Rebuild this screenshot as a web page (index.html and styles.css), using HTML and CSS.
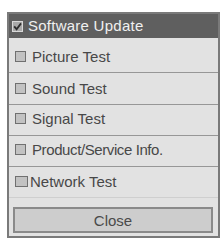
FILE: index.html
```html
<!DOCTYPE html>
<html>
<head>
<meta charset="utf-8">
<link rel="stylesheet" href="styles.css">
</head>
<body>
<div class="panel">
  <div class="row head">
    <svg class="chk" width="11" height="11" viewBox="0 0 11 11"><rect x="0.5" y="0.5" width="10" height="10" fill="#a9a9a9" stroke="#d8d8d8"/><path d="M2.2 5.4 L4.6 8.2 L9 2.4" fill="none" stroke="#2e2e2e" stroke-width="1.8"/></svg>
    <span class="ht">Software Update</span>
  </div>
  <div class="row r1"><i class="box"></i><span>Picture Test</span></div>
  <div class="row r2"><i class="box"></i><span>Sound Test</span></div>
  <div class="row r3"><i class="box"></i><span>Signal Test</span></div>
  <div class="row r3"><i class="box"></i><span class="narrow">Product/Service Info.</span></div>
  <div class="row r3 last"><i class="box wide"></i><span class="nt">Network Test</span></div>
  <div class="foot"><div class="btn">Close</div></div>
</div>
</body>
</html>
```
FILE: styles.css
```css
html, body { margin: 0; padding: 0; background: #fff; }
body { font-family: "Liberation Sans", Arial, sans-serif; }
.panel {
  margin: 12px 0 0 7px;
  width: 209px;
  border: 2px solid #7a7a7a;
  background: #e2e2e2;
}
.row {
  display: flex;
  align-items: center;
  gap: 6px;
  padding-left: 6px;
  border-bottom: 1px solid #979797;
  font-size: 15px;
  color: #484848;
  box-sizing: border-box;
}
.head {
  height: 24px;
  background: #5f5f5f;
  color: #f0f0f0;
  border-bottom: none;
  padding-left: 3px;
  padding-bottom: 2px;
  gap: 5px;
}
.ht { letter-spacing: 0.25px; }
.narrow { letter-spacing: -0.4px; }
.r1 { height: 35px; padding-top: 3px; }
.r2 { height: 32px; }
.r3 { height: 31px; padding-bottom: 3px; }
.last { border-bottom-color: #cfcfcf; padding-bottom: 1px; }
.box {
  display: block;
  width: 9px;
  height: 9px;
  background: #c2c2c2;
  border: 1px solid #707070;
  flex: none;
}
.box.wide { width: 11px; }
.nt { margin-left: -4px; }
.chk { display: block; flex: none; margin-top: 2px; }
.foot {
  padding: 9px 5px 3px 4px;
}
.btn {
  height: 20px;
  border: 2px solid #8a8a8a;
  background: #cdcdcd;
  color: #4a4a4a;
  font-size: 15px;
  text-align: center;
  line-height: 20px;
  padding-top: 2px;
  box-sizing: content-box;
}
```
